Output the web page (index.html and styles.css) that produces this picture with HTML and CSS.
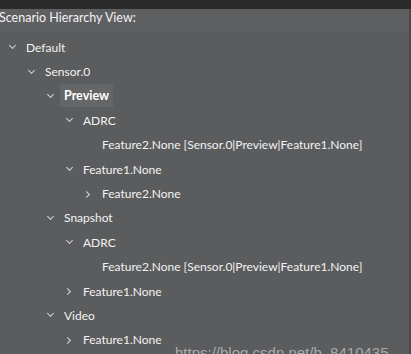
FILE: index.html
```html
<!DOCTYPE html>
<html lang="en">
<head>
  <meta charset="UTF-8" />
  <title>Scenario Hierarchy View</title>
  <link rel="stylesheet" href="styles.css">
</head>
<body>
  <div class="topbar"></div>
  <div class="panel">
    <div class="title">Scenario Hierarchy View:</div>
    <ul class="tree">
      <li class="row open"><span class="arrow"></span><span class="label">Default</span></li>
      <li class="row open l1"><span class="arrow"></span><span class="label">Sensor.0</span></li>
      <li class="row open l2 selected"><span class="arrow"></span><span class="label">Preview</span></li>
      <li class="row open l3"><span class="arrow"></span><span class="label">ADRC</span></li>
      <li class="row leaf l4"><span class="arrow"></span><span class="label">Feature2.None [Sensor.0|Preview|Feature1.None]</span></li>
      <li class="row open l3"><span class="arrow"></span><span class="label">Feature1.None</span></li>
      <li class="row closed l4"><span class="arrow"></span><span class="label">Feature2.None</span></li>
      <li class="row open l2"><span class="arrow"></span><span class="label">Snapshot</span></li>
      <li class="row open l3"><span class="arrow"></span><span class="label">ADRC</span></li>
      <li class="row leaf l4"><span class="arrow"></span><span class="label">Feature2.None [Sensor.0|Preview|Feature1.None]</span></li>
      <li class="row closed l3"><span class="arrow"></span><span class="label">Feature1.None</span></li>
      <li class="row open l2"><span class="arrow"></span><span class="label">Video</span></li>
      <li class="row closed l3"><span class="arrow"></span><span class="label">Feature1.None</span></li>
    </ul>
    <div class="watermark">https://blog.csdn.net/b_8410435</div>
  </div>
</body>
</html>
```

FILE: styles.css
```css
* {
  margin: 0;
  padding: 0;
  box-sizing: border-box;
}

body {
  background: #5b5c5e;
  font-family: 'Lato', 'Open Sans', sans-serif;
  font-size: 12px;
  color: #f2f2f2;
  overflow: hidden;
  height: 354px;
}

.topbar {
  height: 9px;
  background: #2b2b2b;
}

.panel {
  position: relative;
  height: 345px;
  border-right: 2px solid #48494b;
}

.title {
  height: 22px;
  line-height: 18px;
  margin-left: -1px;
  font-size: 12.5px;
  background: #5e5f61;
}

.tree {
  list-style: none;
  padding-top: 4px;
}

.row {
  display: flex;
  align-items: center;
  height: 24.4px;
  padding-left: 7px;
}

.l1 { padding-left: 26px; }
.l2 { padding-left: 45px; }
.l3 { padding-left: 64px; }
.l4 { padding-left: 83px; }

.arrow {
  width: 12px;
  height: 12px;
  margin-right: 7px;
  position: relative;
  flex-shrink: 0;
}

.open .arrow::before {
  content: "";
  position: absolute;
  left: 3px;
  top: 2px;
  width: 4px;
  height: 4px;
  border-right: 1.7px solid #d4d4d4;
  border-bottom: 1.7px solid #d4d4d4;
  transform: rotate(45deg);
}

.closed .arrow::before {
  content: "";
  position: absolute;
  left: 1px;
  top: 4px;
  width: 4px;
  height: 4px;
  border-right: 1.7px solid #d4d4d4;
  border-bottom: 1.7px solid #d4d4d4;
  transform: rotate(-45deg);
}

.label {
  white-space: nowrap;
}

.selected .label {
  font-weight: bold;
  font-size: 12.5px;
  background: #656668;
  padding: 4px;
  margin-left: -4px;
  color: #ffffff;
}

.watermark {
  position: absolute;
  left: 175px;
  top: 335px;
  font-family: 'Liberation Sans', sans-serif;
  font-size: 15px;
  color: #a9aaab;
  white-space: nowrap;
}
```
